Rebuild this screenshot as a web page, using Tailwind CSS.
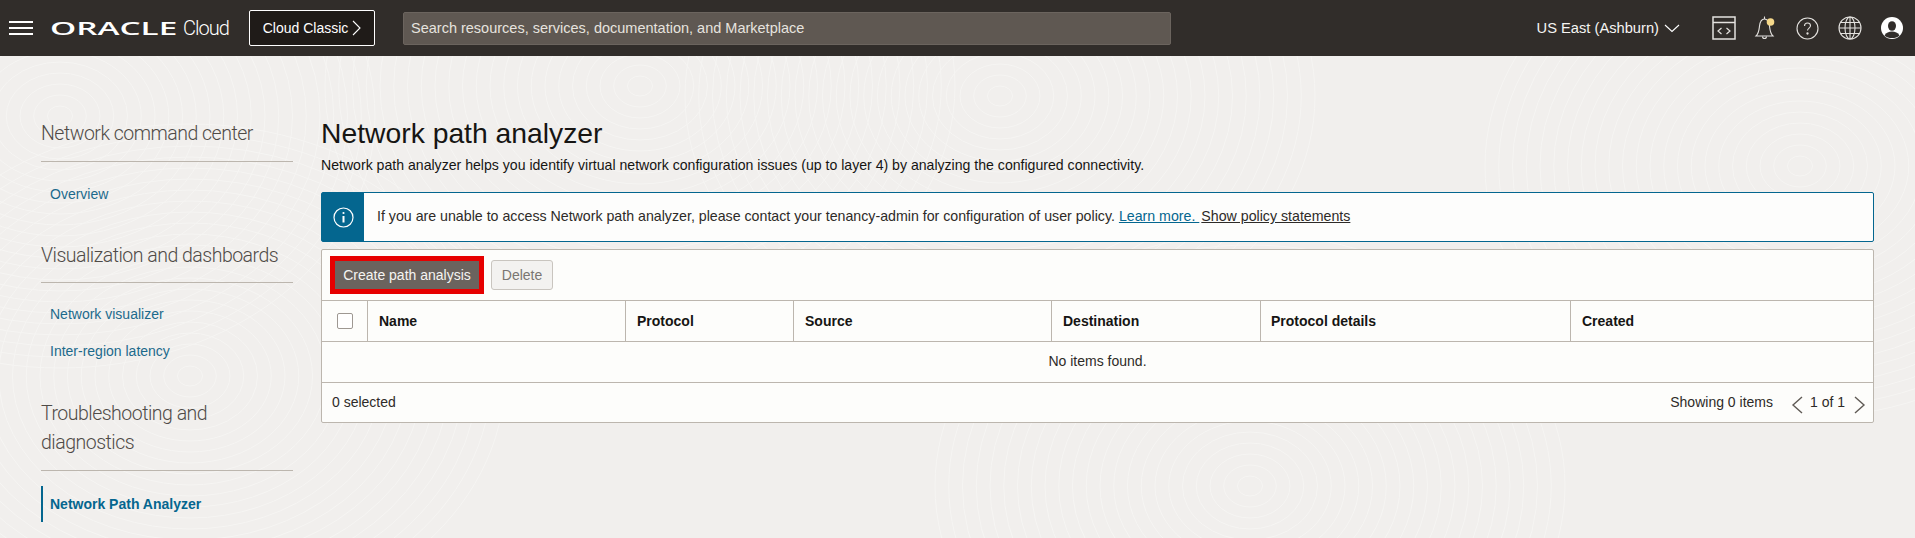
<!DOCTYPE html>
<html lang="en">
<head>
    <meta charset="UTF-8">
    <title>Network path analyzer</title>
    <script src="https://cdn.jsdelivr.net/npm/@tailwindcss/browser@4"></script>
</head>
<body class="relative h-[538px] overflow-hidden bg-[#f1efed] font-['Liberation_Sans',Arial,sans-serif] text-[#161513]">

    <!-- fingerprint texture behind the page -->
    <svg id="texture" class="absolute left-0 top-[56px]" width="1915" height="482" fill="none" stroke="#f6f5f3" stroke-width="1"></svg>

    <!-- top bar -->
    <header class="relative flex h-14 items-center bg-[#312d2a] text-white">
        <button class="ml-[9px] flex w-6 flex-col gap-[4px]">
            <span class="h-[2px] w-6 bg-white"></span>
            <span class="h-[2px] w-6 bg-white"></span>
            <span class="h-[2px] w-6 bg-white"></span>
        </button>
        <div class="ml-[17px] flex w-[178px] items-baseline">
            <span class="w-[133px] shrink-0 origin-left scale-x-[1.85] font-['Open_Sans',sans-serif] text-[18px] font-semibold leading-none">ORACLE</span>
            <span class="font-['Roboto',sans-serif] text-[20px] font-light leading-none tracking-[-1px]">Cloud</span>
        </div>
        <button class="ml-[21px] flex h-[36px] w-[126px] items-center justify-center gap-1 rounded-[2px] border border-white bg-[#1f1b18] text-[14px]">
            Cloud Classic
            <svg width="9" height="16" viewBox="0 0 9 16" fill="none" stroke="white" stroke-width="1.1"><path d="M1 1l7 7-7 7"/></svg>
        </button>
        <div class="ml-[28px] flex h-[33px] w-[768px] items-center rounded-[2px] border border-[#6b645e] bg-[#5f5852] pl-[7px] pt-px text-[14.500px] text-[#e6e3df]">Search resources, services, documentation, and Marketplace</div>
        <div class="ml-auto flex items-center">
            <span class="text-[14.700px] text-[#f5f4f2]">US East (Ashburn)</span>
            <svg class="ml-[5px]" width="16" height="9" viewBox="0 0 16 9" fill="none" stroke="white" stroke-width="1.1"><path d="M1 1l7 6.500L15 1"/></svg>
            <!-- code editor -->
            <svg class="ml-[32px]" width="24" height="24" viewBox="0 0 24 24" fill="none" stroke="#e4e2df" stroke-width="1.5"><rect x="1" y="1" width="22" height="22"/><path d="M1 6.500h22"/><path d="M9.500 12l-3.500 3 3.500 3M14.500 12l3.500 3-3.500 3" stroke-width="1.2"/></svg>
            <!-- bell -->
            <svg class="ml-[18px]" width="24" height="26" viewBox="0 0 24 26" fill="none" stroke="#e4e2df" stroke-width="1.1"><path d="M2 21c3-3 3-6 3.500-10C6 7 8 4 10.500 4s4.500 3 5 7c.5 4 .5 7 3.500 10z"/><path d="M10.500 1.500V4"/><path d="M8.500 21.500a2 2 0 0 0 4 0"/><circle cx="16.500" cy="7" r="3.800" fill="#f5d88a" stroke="none"/></svg>
            <!-- help -->
            <svg class="ml-[18px]" width="23" height="23" viewBox="0 0 23 23" fill="none" stroke="#e4e2df" stroke-width="1.100"><circle cx="11.500" cy="11.500" r="10.500"/><path d="M8.500 9c0-1.800 1.300-3 3-3s3 1.200 3 2.800c0 2.200-3 2.400-3 4.700"/><circle cx="11.500" cy="16.500" r=".6" fill="#e4e2df"/></svg>
            <!-- globe -->
            <svg class="ml-[19px]" width="24" height="24" viewBox="0 0 24 24" fill="none" stroke="#e4e2df" stroke-width="1.100"><circle cx="12" cy="12" r="11"/><ellipse cx="12" cy="12" rx="5" ry="11"/><path d="M12 1v22M1 12h22M2.500 6.500h19M2.500 17.500h19"/></svg>
            <!-- avatar -->
            <svg class="ml-[19px] mr-[12px]" width="22" height="22" viewBox="0 0 22 22"><circle cx="11" cy="11" r="11" fill="white"/><ellipse cx="11" cy="9" rx="4" ry="4.800" fill="#312d2a"/><path d="M3.500 18.500c1.500-3 4.500-4 7.500-4s6 1 7.500 4C16.500 20.500 14 21 11 21s-5.500-.5-7.500-2.500z" fill="#312d2a"/></svg>
        </div>
    </header>

    <div class="relative flex items-start">
        <!-- side menu -->
        <aside class="ml-[41px] w-[252px] shrink-0 pt-[63px]">
            <h3 class="font-['Roboto',sans-serif] text-[19.500px] font-light leading-[30px] tracking-[-0.5px] text-[#4f4b47]">Network command center</h3>
            <div class="mt-[12px] h-px bg-[#bcb6ae]"></div>
            <a class="mt-[22px] block pl-[9px] text-[14px] leading-[20px] text-[#1c6a8c]">Overview</a>
            <h3 class="mt-[37px] font-['Roboto',sans-serif] text-[19.500px] font-light leading-[30px] tracking-[-0.5px] text-[#4f4b47]">Visualization and dashboards</h3>
            <div class="mt-[11px] h-px bg-[#bcb6ae]"></div>
            <a class="mt-[21px] block pl-[9px] text-[14px] leading-[20px] text-[#1c6a8c]">Network visualizer</a>
            <a class="mt-[17px] block pl-[9px] text-[14px] leading-[20px] text-[#1c6a8c]">Inter-region latency</a>
            <h3 class="mt-[38px] font-['Roboto',sans-serif] text-[19.500px] font-light leading-[29px] tracking-[-0.5px] text-[#4f4b47]">Troubleshooting and diagnostics</h3>
            <div class="mt-[13px] h-px bg-[#bcb6ae]"></div>
            <a class="mt-[15px] block h-9 border-l-2 border-[#04668f] pl-[7px] text-[14px] font-bold leading-[36px] text-[#04668f]">Network Path Analyzer</a>
        </aside>

        <!-- main content -->
        <main class="ml-[28px] w-[1553px] pt-[58px]">
            <h1 class="text-[28.300px] leading-[38px]">Network path analyzer</h1>
            <p class="mt-[3px] text-[14.100px] leading-[20px]">Network path analyzer helps you identify virtual network configuration issues (up to layer 4) by analyzing the configured connectivity.</p>

            <div class="mt-[17px] flex h-[50px] items-stretch rounded-[2px] border border-[#04668f] bg-[#fdfdfc]">
                <div class="flex w-[42px] items-center justify-center bg-[#04668f]">
                    <svg width="21" height="21" viewBox="0 0 21 21" fill="none" stroke="white" stroke-width="1.200"><circle cx="10.500" cy="10.500" r="9.500"/><path d="M10.500 9v6.500" stroke-width="2"/><circle cx="10.500" cy="6" r="1.100" fill="white" stroke="none"/></svg>
                </div>
                <div class="flex items-center pl-[13px] text-[14.200px] text-[#2e2b28]">
                    If you are unable to access Network path analyzer, please contact your tenancy-admin for configuration of user policy.
                    <a class="ml-1 text-[#04668f] underline">Learn more.&nbsp;</a>
                    <a class="ml-[2px] underline">Show policy statements</a>
                </div>
            </div>

            <section class="mt-[7px] h-[174px] rounded-[2px] border border-[#bcb6ae] bg-[#fdfdfb]">
                <div class="flex h-[50px] items-center pl-[8px]">
                    <div class="border-[5px] border-[#e60000]">
                        <button class="h-[28px] w-[144px] bg-[#6b635e] text-[14px] text-[#f5f4f2]">Create path analysis</button>
                    </div>
                    <button class="ml-[7px] h-[30px] w-[62px] rounded-[3px] border border-[#c9c5bf] bg-[#f3f2f0] text-[14px] text-[#7a7672]">Delete</button>
                </div>
                <div class="flex h-[42px] border-y border-[#bcb6ae] text-[14px] font-bold">
                    <div class="flex w-[46px] items-center justify-center border-r border-[#bcb6ae]"><span class="h-4 w-4 rounded-[2px] border border-[#9e9892] bg-white"></span></div>
                    <div class="flex w-[258px] items-center border-r border-[#bcb6ae] pl-[11px]">Name</div>
                    <div class="flex w-[168px] items-center border-r border-[#bcb6ae] pl-[11px]">Protocol</div>
                    <div class="flex w-[258px] items-center border-r border-[#bcb6ae] pl-[11px]">Source</div>
                    <div class="flex w-[209px] items-center border-r border-[#bcb6ae] pl-[11px]">Destination</div>
                    <div class="flex w-[310px] items-center border-r border-[#bcb6ae] pl-[10px]">Protocol details</div>
                    <div class="flex flex-1 items-center pl-[11px]">Created</div>
                </div>
                <div class="flex h-[41px] items-center justify-center border-b border-[#bcb6ae] pb-[2px] text-[14px] text-[#2e2b28]">No items found.</div>
                <div class="flex h-[40px] items-center pb-[2px] pl-[10px] pr-[7px] text-[14px] text-[#2e2b28]">
                    <span>0 selected</span>
                    <span class="ml-auto">Showing 0 items</span>
                    <svg class="ml-[18px] mt-[5px]" width="12" height="18" viewBox="0 0 12 18" fill="none" stroke="#5f5a55" stroke-width="1.400"><path d="M11 1L2 9l9 8"/></svg>
                    <span class="ml-[7px]">1 of 1</span>
                    <svg class="ml-[9px] mt-[5px]" width="12" height="18" viewBox="0 0 12 18" fill="none" stroke="#5f5a55" stroke-width="1.400"><path d="M1 1l9 8-9 8"/></svg>
                </div>
            </section>
        </main>
    </div>

    <script>
        // concentric rings, loosely like the console's background
        var texture = document.getElementById('texture');
        var swirls = [[190, 320], [640, 30], [1250, 430], [1800, 110], [60, 60], [1000, 40]];
        swirls.forEach(function (s) {
            for (var r = 10; r < 260; r += 11) {
                var ring = document.createElementNS('http://www.w3.org/2000/svg', 'ellipse');
                ring.setAttribute('cx', s[0]);
                ring.setAttribute('cy', s[1]);
                ring.setAttribute('rx', r * 1.25);
                ring.setAttribute('ry', r);
                texture.appendChild(ring);
            }
        });
    </script>
</body>
</html>
